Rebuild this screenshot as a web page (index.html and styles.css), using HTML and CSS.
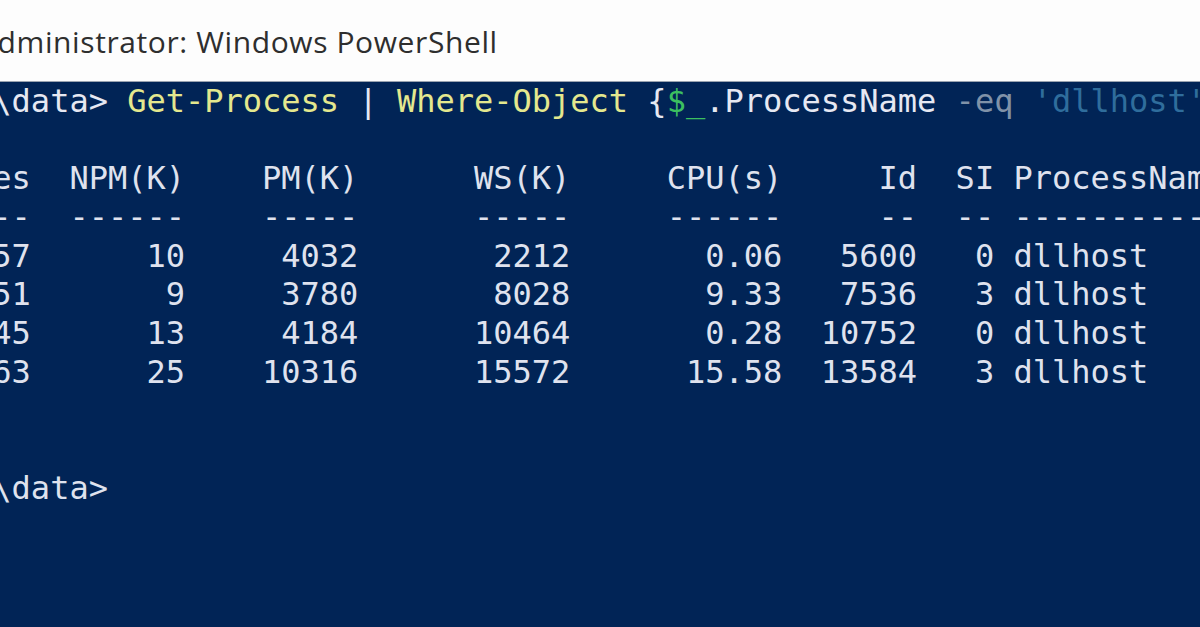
FILE: index.html
```html
<!DOCTYPE html>
<html>
<head>
<meta charset="utf-8">
<link rel="stylesheet" href="styles.css">
</head>
<body>
<div class="window">
  <div class="titlebar"><span class="title">Administrator: Windows PowerShell</span></div>
  <div class="console">
<pre class="out"><span class="fg">PS C:\data&gt; </span><span class="cmd">Get-Process</span><span class="fg"> | </span><span class="cmd">Where-Object</span><span class="fg"> {</span><span class="var">$_</span><span class="fg">.ProcessName </span><span class="op">-eq</span><span class="fg"> </span><span class="str">'dllhost'</span><span class="fg">}</span>

Handles  NPM(K)    PM(K)      WS(K)     CPU(s)     Id  SI ProcessName
-------  ------    -----      -----     ------     --  -- -----------
    157      10     4032       2212       0.06   5600   0 dllhost
    151       9     3780       8028       9.33   7536   3 dllhost
    145      13     4184      10464       0.28  10752   0 dllhost
    263      25    10316      15572      15.58  13584   3 dllhost


PS C:\data&gt;</pre>
  </div>
</div>
</body>
</html>
```
FILE: styles.css
```css
html, body {
  margin: 0;
  padding: 0;
  width: 1200px;
  height: 627px;
  overflow: hidden;
  background: #012456;
}
.window {
  display: flex;
  flex-direction: column;
  width: 1200px;
  height: 627px;
  overflow: hidden;
}
.titlebar {
  height: 82px;
  flex: 0 0 82px;
  background: #fdfdfd;
  border-bottom: 1px solid #9aa3b0;
  box-sizing: border-box;
  display: flex;
  align-items: center;
  overflow: hidden;
}
.title {
  font-family: "Open Sans", "Noto Sans", sans-serif;
  font-size: 30px;
  color: #2e2e2e;
  margin-left: -22px;
  margin-top: 2px;
  white-space: nowrap;
  letter-spacing: 0.6px;
}
.console {
  flex: 1;
  background: #012456;
  overflow: hidden;
}
.out {
  margin: 0 0 0 -104px;
  font-family: "DejaVu Sans Mono", "Liberation Mono", monospace;
  font-size: 32px;
  line-height: 38.67px;
  color: #dfe2ee;
  white-space: pre;
}
.fg { color: #e6e8f2; }
.cmd { color: #e4e88e; }
.var { color: #3cc060; }
.op { color: #8092a8; }
.str { color: #2f6d9c; }
```
